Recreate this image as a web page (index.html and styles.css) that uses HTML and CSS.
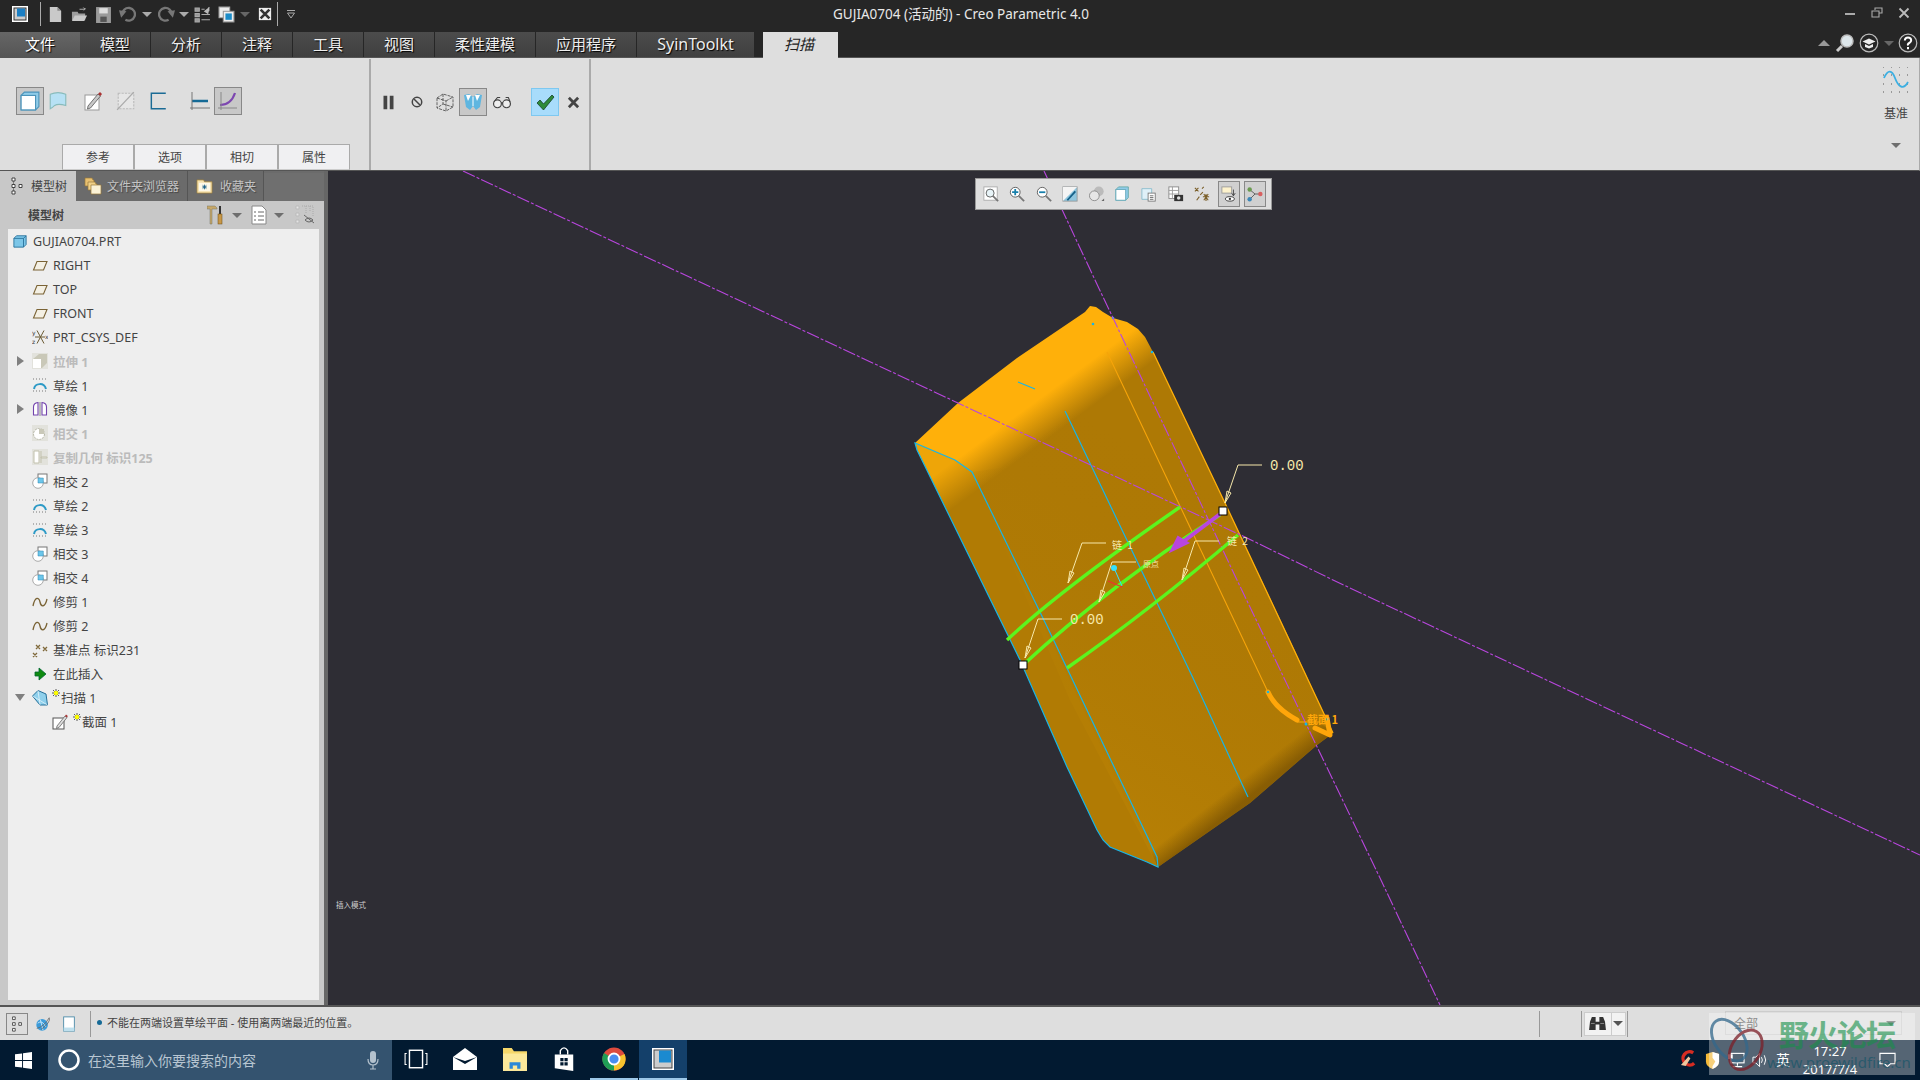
FILE: index.html
```html
<!DOCTYPE html>
<html lang="zh">
<head>
<meta charset="utf-8">
<title>GUJIA0704 (活动的) - Creo Parametric 4.0</title>
<link rel="stylesheet" href="styles.css">
</head>
<body>
<svg class="sprite" aria-hidden="true">
  <defs>
    <symbol id="i-plane" viewBox="0 0 16 16"><path d="M1.500 13 5 4.500h10L11.500 13Z" fill="#f4f0e4" stroke="#7a6335" stroke-width="1.100"/></symbol>
    <symbol id="i-csys" viewBox="0 0 16 16"><path d="M5 1.500 12 14.500M12 1.500 5 14.500M3 8h10" stroke="#6b5a32" stroke-width="1" fill="none"/><text x="0" y="6" class="tiny">y</text><text x="0" y="15" class="tiny">z</text><text x="13" y="10" class="tiny">x</text></symbol>
    <symbol id="i-extrude" viewBox="0 0 16 16"><rect width="16" height="16" fill="#e2e2dc"/><path d="M1 6 7 1h8v9l-5 5H1Z" fill="#c9c8b8"/><rect x="1" y="6" width="8" height="9" fill="#fff"/></symbol>
    <symbol id="i-sketch" viewBox="0 0 16 16"><path d="M1 2h14M1 14h14" stroke="#777" stroke-width="1" stroke-dasharray="1 2"/><path d="M2 12C3 6 12 5 14 12" stroke="#2d9ac6" stroke-width="2" fill="none"/></symbol>
    <symbol id="i-mirror" viewBox="0 0 16 16"><path d="M8 1v14" stroke="#888"/><path d="M1.500 14V6Q1.500 2 6 1.500V14ZM14.500 14V6Q14.500 2 10 1.500V14Z" fill="#fff" stroke="#7344ad" stroke-width="1.100"/></symbol>
    <symbol id="i-inter" viewBox="0 0 16 16"><rect x="6" y="1" width="9" height="9" fill="#fff" stroke="#777"/><circle cx="6" cy="10" r="5.300" fill="#fff" stroke="#aaa"/><path d="M6 5h5.300v5H6Z" fill="#6cc6ea" stroke="#2d87b0" stroke-width=".5"/></symbol>
    <symbol id="i-inter-off" viewBox="0 0 16 16"><rect width="16" height="16" fill="#e2e2dc"/><circle cx="7" cy="9" r="5.500" fill="#fff" stroke="#b5b5a5" stroke-dasharray="2 1"/><path d="M7 4h5v5H7Z" fill="#c9c8b8"/></symbol>
    <symbol id="i-copy" viewBox="0 0 16 16"><rect width="16" height="16" fill="#e2e2dc"/><path d="M2 2h5v12H2ZM9 8h6v1H9ZM9 2v12" fill="#fff" stroke="#c2c1ad"/></symbol>
    <symbol id="i-trim" viewBox="0 0 16 16"><path d="M1 12C3 2 7 3 8 8S13 14 15 5" stroke="#7a6335" stroke-width="1.300" fill="none"/></symbol>
    <symbol id="i-points" viewBox="0 0 16 16"><path d="M4 3 8 7M8 3 4 7M11 5l4 4M15 5l-4 4M1 11l4 4M5 11l-4 4" stroke="#806a3c" stroke-width="1.300"/></symbol>
    <symbol id="i-insert" viewBox="0 0 16 16"><path d="M3 6h4V2l7 6-7 6v-4H3Z" fill="#0f8a10" stroke="#063" stroke-width=".8"/></symbol>
    <symbol id="i-sweep" viewBox="0 0 16 16"><path d="M.500 6 6 .500 14 4l1.500 11H8Z" fill="#8fd0ec" stroke="#27709a"/><path d="M6 .500 8 15M.500 6 15.500 15" stroke="#fff" stroke-width=".6"/></symbol>
    <symbol id="i-pencil" viewBox="0 0 16 16"><rect x="1" y="4" width="11" height="11" fill="#fff" stroke="#555"/><path d="M5 12 13 2l2 1.500-8 10-2.500 1Z" fill="#ddd" stroke="#666" stroke-width=".8"/><path d="M13 2l2 1.500 .8-1.500L14 .5Z" fill="#a33"/></symbol>
    <symbol id="i-star" viewBox="0 0 8 8"><path d="M4 0v8M0 4h8M1 1l6 6M7 1 1 7" stroke="#333" stroke-width=".8"/><circle cx="4" cy="4" r="2.200" fill="#ff0"/></symbol>
  </defs>
</svg>

<div class="app">
  <header class="titlebar">
    <div class="qa">
      <svg class="qa-logo" viewBox="0 0 16 16"><rect width="16" height="16" fill="#fff"/><rect x="2" y="2" width="12" height="12" fill="#ccc" stroke="#333"/><rect x="5" y="2.500" width="8" height="8" fill="#1b7fc4"/></svg>
      <span class="qa-sep"></span>
      <button class="qa-btn"><svg viewBox="0 0 16 18"><path d="M2 1h8l4 4v12H2Z" fill="#c9c9c9"/><path d="M10 1v4h4" fill="#888"/></svg></button>
      <button class="qa-btn"><svg viewBox="0 0 18 16"><path d="M1 5h6l1 2h7v7H1Z" fill="#9e9e9e"/><path d="M4 9h13l-3 6H1Z" fill="#c9c9c9"/><path d="M9 2h5l-2-2 4 2-4 3 2-2H9Z" fill="#aaa"/></svg></button>
      <button class="qa-btn"><svg viewBox="0 0 16 16"><path d="M1 1h14v15H1Z" fill="#9a9a9a"/><rect x="4" y="2" width="8" height="5" fill="#ddd"/><rect x="5" y="10" width="6" height="5" fill="#555"/></svg></button>
      <button class="qa-btn"><svg viewBox="0 0 16 16"><path d="M3 8a6 6 0 1 1 3 5" fill="none" stroke="#777" stroke-width="2.200"/><path d="M0 4 7 5 2 11Z" fill="#777"/></svg></button>
      <span class="qa-arrow arrow-15"><i class="tri tri-light"></i></span>
      <button class="qa-btn"><svg viewBox="0 0 16 16"><path d="M13 8a6 6 0 1 0-3 5" fill="none" stroke="#777" stroke-width="2.200"/><path d="M16 4 9 5l5 6Z" fill="#777"/></svg></button>
      <span class="qa-arrow"><i class="tri tri-light"></i></span>
      <button class="qa-btn"><svg viewBox="0 0 16 16"><path d="M1 2h4v3H1ZM1 7h4v3H1ZM1 12h4v3H1ZM7 3h3M7 8h8M7 13h8" fill="#999" stroke="#aaa"/><path d="M10 5l4-3-1 5ZM14 1v4" fill="#bbb" stroke="#bbb"/></svg></button>
      <button class="qa-btn"><svg viewBox="0 0 16 16"><rect x="1" y="1" width="10" height="10" fill="#eee" stroke="#aaa"/><rect x="5" y="5" width="10" height="10" fill="#eee" stroke="#999"/><rect x="7" y="7" width="6" height="6" fill="#1c8cc8"/></svg></button>
      <span class="qa-arrow arrow-14"><i class="tri tri-dim"></i></span>
      <button class="qa-btn btn-close"><svg viewBox="0 0 16 16"><rect x="1" y="1" width="14" height="14" fill="#eee"/><path d="M3 3 13 13M13 3 3 13" stroke="#333" stroke-width="3"/></svg></button>
      <span class="qa-sep sep-end"></span>
      <svg class="qa-more" viewBox="0 0 10 10"><path d="M1 1.500h8M1.500 4h7L5 9Z" fill="none" stroke="#aaa"/></svg>
    </div>
    <div class="title">GUJIA0704 (活动的) - Creo Parametric 4.0</div>
    <div class="winctl">
      <svg viewBox="0 0 12 12"><path d="M1 7h10" stroke="#aaa" stroke-width="2"/></svg>
      <svg viewBox="0 0 12 12"><path d="M4 3V1h7v5H8M1 4h7v6H1Z" fill="none" stroke="#aaa" stroke-width="1.100"/></svg>
      <svg viewBox="0 0 12 12"><path d="M1.500 1.500l9 9M10.500 1.500l-9 9" stroke="#bbb" stroke-width="1.800"/></svg>
    </div>
  </header>

  <nav class="tabs">
    <div class="tab tab-file">文件</div>
    <div class="tab">模型</div>
    <div class="tab">分析</div>
    <div class="tab">注释</div>
    <div class="tab">工具</div>
    <div class="tab">视图</div>
    <div class="tab tab-wide">柔性建模</div>
    <div class="tab tab-wide">应用程序</div>
    <div class="tab tab-syin">SyinToolkt</div>
    <div class="tab tab-active">扫描</div>
    <div class="tab-tools">
      <svg class="tt-up" viewBox="0 0 12 8"><path d="M0 7 6 1l6 6Z" fill="#999"/></svg>
      <svg class="tt-round" viewBox="0 0 20 20"><circle cx="12" cy="8" r="6" fill="#dde6ea" stroke="#bbb" stroke-width="1.500"/><path d="M7 13 2 18" stroke="#ccc" stroke-width="3"/></svg>
      <svg class="tt-round" viewBox="0 0 20 20"><circle cx="10" cy="10" r="8.800" fill="none" stroke="#bbb" stroke-width="1.200"/><path d="M3.500 8.500 10 5.500l6.500 3L10 11.500Z" fill="#eee"/><path d="M6 11v3l4 1.500 4-1.500v-3l-4 2Z" fill="#eee"/></svg>
      <i class="tri tri-dim tt-tri"></i>
      <svg class="tt-round" viewBox="0 0 20 20"><circle cx="10" cy="10" r="8.800" fill="none" stroke="#bbb" stroke-width="1.200"/><path d="M6.800 7.500Q7 4.500 10 4.500t3.200 2.800Q13.200 9 11.300 10T10 12.500M10 14v2.200" fill="none" stroke="#fff" stroke-width="2"/></svg>
    </div>
  </nav>

  <section class="ribbon">
    <div class="rgroup rgroup-a">
      <div class="tools">
        <button class="tb tb-on"><svg viewBox="0 0 18 18"><path d="M1 4 4 1h13v13l-3 3H1Z" fill="#8fcbe8" stroke="#4c94ba"/><rect x="1" y="4" width="13" height="13" fill="#fff" stroke="#4c94ba"/></svg></button>
        <button class="tb"><svg viewBox="0 0 18 18"><path d="M2 3Q9 0 16 3V13Q9 11 6 13Q4 15 2 16Z" fill="#b7e1f4" stroke="#8bb"/></svg></button>
        <button class="tb ml7"><svg viewBox="0 0 20 20"><rect x="2" y="4" width="14" height="15" fill="#fff" stroke="#999"/><path d="M5 15 15 3l2.500 2-10 12-3 1Z" fill="#c8c8c8" stroke="#555" stroke-width=".8"/><path d="M15 3l2.500 2L19 3 17 1Z" fill="#a33"/></svg></button>
        <button class="tb ml5"><svg viewBox="0 0 18 18"><rect x="2" y="2" width="14" height="14" fill="#e6e6e6" stroke="#bbb" stroke-dasharray="2 1"/><path d="M1 17 16 1" stroke="#aaa" stroke-width="1.200"/></svg></button>
        <button class="tb ml4"><svg viewBox="0 0 18 18"><path d="M16 2H3v14h13" fill="none" stroke="#1a6b95" stroke-width="1.300"/></svg></button>
        <button class="tb ml14"><svg viewBox="0 0 20 20"><path d="M2 10h16" stroke="#156a96" stroke-width="2.500"/><path d="M2 1v18M0 17h20" stroke="#777"/></svg></button>
        <button class="tb tb-on"><svg viewBox="0 0 20 20"><path d="M2 14Q13 14 17 2" fill="none" stroke="#7d47b0" stroke-width="2.200"/><path d="M3 1v18M0 17h19" stroke="#888"/></svg></button>
      </div>
      <div class="subtabs">
        <div class="subtab">参考</div>
        <div class="subtab">选项</div>
        <div class="subtab">相切</div>
        <div class="subtab">属性</div>
      </div>
    </div>
    <div class="rgroup rgroup-b">
      <div class="tools tools-b">
        <button class="tb"><svg class="sm-pause" viewBox="0 0 14 18"><path d="M1 1h4.500v16H1ZM8.500 1H13v16H8.500Z" fill="#444"/></svg></button>
        <button class="tb ml1"><svg class="sm-stop" viewBox="0 0 16 16"><circle cx="8" cy="8" r="6.300" fill="none" stroke="#444" stroke-width="2"/><path d="M4 4l8 8" stroke="#444" stroke-width="2"/></svg></button>
        <button class="tb"><svg viewBox="0 0 20 20"><path d="M2 6 8 2l10 3v10l-7 4-9-3ZM2 6l9 3v10M11 9l7-4M8 2v10L2 16M8 12l10 3" fill="none" stroke="#555" stroke-width=".9" stroke-dasharray="3 1"/></svg></button>
        <button class="tb tb-on"><svg viewBox="0 0 20 20"><path d="M1 3 6 2 10 5l4-3 5 1-2 12-4 3-3-4-3 4-4-3Z" fill="#5fb6e0"/><path d="M3 3h5l-3 6ZM12 3h5l-3 6Z" fill="#fff"/><path d="M10 5v9" stroke="#fff"/></svg></button>
        <button class="tb ml1"><svg viewBox="0 0 22 16"><circle cx="6" cy="10" r="4.300" fill="#eee" stroke="#444" stroke-width="1.300"/><circle cx="16" cy="10" r="4.300" fill="#eee" stroke="#444" stroke-width="1.300"/><path d="M10 9h2M2 8 6 3h3M20 8l-2-5h-3" fill="none" stroke="#444" stroke-width="1.200"/></svg></button>
        <button class="tb tb-ok ml15"><svg viewBox="0 0 20 20"><path d="M2 11l3-3 3.500 4L17 3l2 2-10.500 13Z" fill="#2e8b3a" stroke="#16402a" stroke-width=".8"/></svg></button>
        <button class="tb"><svg class="sm-x" viewBox="0 0 14 14"><path d="M2 2l10 10M12 2 2 12" stroke="#444" stroke-width="3"/></svg></button>
      </div>
    </div>
    <div class="rgroup-c">
      <svg class="datum-ic" viewBox="0 0 26 26"><path d="M0 0h26M0 8h26M0 17h26M0 25h26" stroke="#555" stroke-width="1" stroke-dasharray="1 7" fill="none"/><path d="M1 11C5 2 9 3 12 11S20 24 25 15" fill="none" stroke="#3cafe2" stroke-width="1.800"/></svg>
      <div class="datum-label">基准</div>
      <i class="tri tri-mid"></i>
    </div>
  </section>

  <main class="main">
    <aside class="side">
      <div class="side-tabs">
        <div class="stab stab-on">
          <svg viewBox="0 0 12 18"><path d="M1 1h3v3H1ZM1 7.500h3v3H1ZM1 14h3v3H1ZM8 7.500h3v3H8Z" fill="#fff" stroke="#333" stroke-width=".9"/><path d="M2.500 4v3.500M2.500 10.500V14" stroke="#333" stroke-width=".5"/></svg>
          <span>模型树</span>
        </div>
        <div class="stab stab-b">
          <svg viewBox="0 0 18 18"><path d="M1 1h7l1 2h1v6H1Z" fill="#e8c070" stroke="#9a7a3a" stroke-width=".7"/><path d="M4 5h7l1 2h1v6H4Z" fill="#f0d088" stroke="#9a7a3a" stroke-width=".7"/><path d="M7 8h10v9H7Z" fill="#fbf2d6" stroke="#9a7a3a" stroke-width=".7"/></svg>
          <span>文件夹浏览器</span>
        </div>
        <div class="stab stab-c">
          <svg viewBox="0 0 18 16"><path d="M1 1h7l1 2h8v12H1Z" fill="#f4e0ae" stroke="#a5853f" stroke-width=".8"/><rect x="3" y="4" width="12" height="9" fill="#fdf8e8"/><path d="M9 6v5M6.500 8.500h5M7 6.800l4 3.400M11 6.800 7 10.200" stroke="#165c85" stroke-width=".9"/></svg>
          <span>收藏夹</span>
        </div>
        <div class="stab stab-rest"></div>
      </div>
      <div class="side-head">
        <span class="side-head-t">模型树</span>
        <svg class="h-ham" viewBox="0 0 16 20"><path d="M0 1h8l2 2v1H5v15H3V4H0Z" fill="#c8a868" stroke="#776" stroke-width=".5"/><rect x="12" y="1" width="2" height="8" fill="#333"/><rect x="11" y="9" width="4" height="10" fill="#c89848" stroke="#6a4a10" stroke-width=".5"/></svg>
        <i class="tri tri-mid h-t1"></i>
        <svg class="h-list" viewBox="0 0 16 20"><path d="M1 1h10l4 4v14H1Z" fill="#fff" stroke="#888"/><path d="M3 7h2M7 7h6M3 11h2M7 11h6M3 15h2M7 15h6" stroke="#666"/></svg>
        <i class="tri tri-mid h-t2"></i>
        <svg class="h-show" viewBox="0 0 20 20"><path d="M1 1h3v3H1ZM1 8h3v3H1ZM1 15h3v3H1Z" fill="#e4e4e4" stroke="#bbb"/><path d="M7 1h11v11M11 1v8M15 1v6" fill="none" stroke="#aaa" stroke-dasharray="1 1"/><path d="M9 10 19 18M10 15q4-4 8 0q-4 4-8 0Z" fill="none" stroke="#666"/></svg>
      </div>
      <div class="tree">
        <div class="row row-root"><svg class="ic ic-root" viewBox="0 0 16 16"><path d="M1 5 4 2h11v10l-3 3H1Z" fill="#7cc6e8" stroke="#27709a"/><path d="M1 5h11v10M12 5l3-3" fill="none" stroke="#27709a"/></svg><span>GUJIA0704.PRT</span></div>
        <div class="row"><i class="caret"></i><svg class="ic"><use href="#i-plane"/></svg><span>RIGHT</span></div>
        <div class="row"><i class="caret"></i><svg class="ic"><use href="#i-plane"/></svg><span>TOP</span></div>
        <div class="row"><i class="caret"></i><svg class="ic"><use href="#i-plane"/></svg><span>FRONT</span></div>
        <div class="row"><i class="caret"></i><svg class="ic"><use href="#i-csys"/></svg><span>PRT_CSYS_DEF</span></div>
        <div class="row row-off"><i class="caret caret-r"></i><svg class="ic"><use href="#i-extrude"/></svg><span>拉伸 1</span></div>
        <div class="row"><i class="caret"></i><svg class="ic"><use href="#i-sketch"/></svg><span>草绘 1</span></div>
        <div class="row"><i class="caret caret-r"></i><svg class="ic"><use href="#i-mirror"/></svg><span>镜像 1</span></div>
        <div class="row row-off"><i class="caret"></i><svg class="ic"><use href="#i-inter-off"/></svg><span>相交 1</span></div>
        <div class="row row-off"><i class="caret"></i><svg class="ic"><use href="#i-copy"/></svg><span>复制几何 标识125</span></div>
        <div class="row"><i class="caret"></i><svg class="ic"><use href="#i-inter"/></svg><span>相交 2</span></div>
        <div class="row"><i class="caret"></i><svg class="ic"><use href="#i-sketch"/></svg><span>草绘 2</span></div>
        <div class="row"><i class="caret"></i><svg class="ic"><use href="#i-sketch"/></svg><span>草绘 3</span></div>
        <div class="row"><i class="caret"></i><svg class="ic"><use href="#i-inter"/></svg><span>相交 3</span></div>
        <div class="row"><i class="caret"></i><svg class="ic"><use href="#i-inter"/></svg><span>相交 4</span></div>
        <div class="row"><i class="caret"></i><svg class="ic"><use href="#i-trim"/></svg><span>修剪 1</span></div>
        <div class="row"><i class="caret"></i><svg class="ic"><use href="#i-trim"/></svg><span>修剪 2</span></div>
        <div class="row"><i class="caret"></i><svg class="ic"><use href="#i-points"/></svg><span>基准点 标识231</span></div>
        <div class="row"><i class="caret"></i><svg class="ic"><use href="#i-insert"/></svg><span>在此插入</span></div>
        <div class="row"><i class="caret caret-d"></i><svg class="ic"><use href="#i-sweep"/></svg><svg class="star"><use href="#i-star"/></svg><span>扫描 1</span></div>
        <div class="row row-child"><svg class="ic"><use href="#i-pencil"/></svg><svg class="star"><use href="#i-star"/></svg><span>截面 1</span></div>
      </div>
    </aside>
    <div class="grip"></div>

    <div class="canvas">
      <svg class="scene" viewBox="328 171 1592 834" preserveAspectRatio="none">
        <defs>
          <linearGradient id="gTop" gradientUnits="userSpaceOnUse" x1="1039" y1="399" x2="1061" y2="429">
            <stop offset="0" stop-color="#ffb00a"/>
            <stop offset="1" stop-color="#ae7905"/>
          </linearGradient>
          <linearGradient id="gFace" gradientUnits="userSpaceOnUse" x1="1230" y1="500" x2="1040" y2="820">
            <stop offset="0" stop-color="#a97504" stop-opacity="0"/>
            <stop offset="1" stop-color="#c08705" stop-opacity=".55"/>
          </linearGradient>
          <linearGradient id="gEdge" gradientUnits="userSpaceOnUse" x1="1226" y1="792" x2="1237" y2="806">
            <stop offset="0" stop-color="#7c5403" stop-opacity="0"/>
            <stop offset="1" stop-color="#7c5403" stop-opacity=".75"/>
          </linearGradient>
        </defs>

        <path class="body" d="M915 443 958 403 1017 358 1085 312 1090 306 1096 307 1103 312 1113 318 1127 322 1138 329 1145 337 1153 352 1225 503 1290 640 1320 705 1333 733 1317 745 1250 803 1158 867 1147 862 1110 847 1103 840 1097 830 1067 767 1020 660 917 450Z"/>
        <path class="face" d="M1000 468 1153 352 1333 733 1158 867 1070 700 972 472Z"/>
        <path class="front" d="M915 443 955 460 972 472 1158 867 1147 862 1110 847 1103 840 1097 830 1067 767 1020 660 917 450Z"/>
        <path class="edge" d="M1333 733 1317 745 1250 803 1158 867 1150 850 1240 780 1310 715Z"/>

        <path class="ln-cyan" d="M915 443 917 450 1020 660 1067 767 1097 830 1103 840 1110 847 1147 862 1158 867 1157 857 1055 643 972 472 955 460 915 443Z"/>
        <path class="ln-cyan" d="M1065 411 1193 678 1248 797M1018 382 1035 389"/>
        <path class="ln-orange" d="M1107 352 1215 580 1267 690"/>
        <path class="ln-edge" d="M1153 352 1225 503 1333 733"/>
        <circle class="dot-s" cx="1093" cy="324" r="1.300"/>
        <circle class="dot-s" cx="1113" cy="318" r="1.300"/>
        <circle class="dot-s" cx="1152" cy="352" r="1.300"/>

        <path class="ln-purple" d="M463 171 958 403 1247 538 1333 580 1920 855"/>
        <path class="ln-purple" d="M1044 171 1095 280 1237 580 1380 878 1440 1005"/>

        <path class="ln-green" d="M1180 507Q1060 590 1007 640"/>
        <path class="ln-green" d="M1220 515Q1110 585 1023 665"/>
        <path class="ln-green" d="M1238 535Q1150 610 1067 668"/>

        <path class="arrow-shaft" d="M1220 514 1180 544"/>
        <path class="arrow-head" d="M1171 551 1178 537 1188 543Z"/>

        <path class="leader" d="M1262 465H1238L1225 503M1062 619H1038L1025 658M1106 543H1082L1068 583M1136 562H1112L1099 602M1219 541H1195L1182 580"/>
        <path class="lead-tip" d="M1225 503 1227 491 1231 493ZM1025 658 1027 646 1031 648ZM1068 583 1070 571 1074 573ZM1099 602 1101 590 1105 592ZM1182 580 1184 568 1188 570Z"/>
        <path class="ln-thin" d="M1114 568 1122 586"/>
        <path class="ln-red" d="M1108 581 1122 587"/>
        <circle class="dot" cx="1114" cy="568" r="3"/>

        <rect class="grabber" x="1219" y="507" width="8" height="8"/>
        <rect class="grabber" x="1019" y="661" width="8" height="8"/>

        <path class="ln-section" d="M1268 692Q1275 708 1297 720M1315 728 1330 735 1327 718"/>
        <path class="ln-sec-thin" d="M1297 722H1320"/>
        <circle class="dot-s" cx="1268" cy="692" r="1.300"/>
        <circle class="dot-s" cx="1306" cy="724" r="1.500"/>
        <circle class="dot-s" cx="1327" cy="719" r="1.500"/>

        <text class="dim" x="1270" y="470">0.00</text>
        <text class="dim" x="1070" y="624">0.00</text>
        <text class="lab" x="1112" y="549">链 1</text>
        <text class="lab lab-sm" x="1143" y="567">原点</text>
        <text class="lab" x="1227" y="545">链 2</text>
        <text class="lab-o" x="1307" y="724">截面 1</text>
        <text class="mode" x="336" y="908">插入模式</text>
      </svg>

      <div class="view-bar">
        <svg viewBox="0 0 18 18"><rect x="1" y="1" width="15" height="15" fill="#fff" stroke="#aaa"/><circle cx="8" cy="8" r="4.500" fill="#e8f4f8" stroke="#555"/><path d="M11 11l6 6" stroke="#777" stroke-width="2"/></svg>
        <svg viewBox="0 0 18 18"><circle cx="7" cy="7" r="5.500" fill="#fff" stroke="#555"/><path d="M7 3.500v7M3.500 7h7" stroke="#177fab" stroke-width="2"/><path d="M11 11l6 6" stroke="#777" stroke-width="2"/></svg>
        <svg viewBox="0 0 18 18"><circle cx="7" cy="7" r="5.500" fill="#fff" stroke="#555"/><path d="M3.500 7h7" stroke="#177fab" stroke-width="2"/><path d="M11 11l6 6" stroke="#777" stroke-width="2"/></svg>
        <svg viewBox="0 0 18 18"><rect x="1" y="1" width="16" height="16" fill="#8fc6de" stroke="#999"/><path d="M1 17V1h16Z" fill="#f4f4f4"/><path d="M6 16 15 6" stroke="#135f87" stroke-width="2"/></svg>
        <svg viewBox="0 0 18 18"><circle cx="11" cy="6" r="5.500" fill="#bbb"/><circle cx="6" cy="11" r="5.500" fill="#e6e6e6" stroke="#888"/><path d="M14 17h3v-3Z" fill="#666"/></svg>
        <svg viewBox="0 0 18 18"><path d="M1 4 4 1h11v12l-3 3H1Z" fill="#8fcbe8" stroke="#6aa"/><rect x="1" y="4" width="11" height="12" fill="#fff" stroke="#6ab"/></svg>
        <svg viewBox="0 0 18 18"><path d="M1 3h11v12H1Z" fill="#dff0f8" stroke="#8bc"/><rect x="8" y="8" width="8" height="9" fill="#fff" stroke="#777"/><path d="M10 11h4M10 13h4M10 15h4" stroke="#666"/></svg>
        <svg viewBox="0 0 18 18"><rect x="1" y="1" width="11" height="13" fill="#fff" stroke="#888"/><path d="M1 5h11M1 9h11M5 1v13" stroke="#999"/><rect x="7" y="10" width="10" height="7" fill="#333"/><circle cx="12" cy="13.500" r="2" fill="#ddd"/></svg>
        <svg viewBox="0 0 18 18"><path d="M1 2l4 4M5 2 1 6M9 3l2-2M7 10l3-3M3 16l3-4M10 12l7 0M13.500 9v8M11 9l5 7M16 9l-5 7" stroke="#7a5e28" stroke-width="1.200" fill="none"/></svg>
        <span class="vb-on"><svg viewBox="0 0 18 18"><rect x="1" y="1" width="11" height="7" fill="#fdf2cc" stroke="#999"/><path d="M14 4v7M12 8l2 3 2-3" stroke="#444" fill="none"/><ellipse cx="10" cy="14.500" rx="5" ry="2.500" fill="#fff" stroke="#333"/><circle cx="10" cy="14.500" r="1.300" fill="#333"/></svg></span>
        <span class="vb-on"><svg viewBox="0 0 18 18"><path d="M3 4 9 9 3 15M9 9h6" stroke="#555" fill="none"/><circle cx="3" cy="4" r="2.500" fill="#6a9a50"/><circle cx="15" cy="9" r="2.500" fill="#d86060"/><circle cx="3" cy="15" r="2.500" fill="#3d88b8"/></svg></span>
      </div>
    </div>
  </main>
  <div class="strip"></div>

  <footer class="status">
    <button class="st-btn st-on"><svg viewBox="0 0 12 18"><path d="M1 1h3v3H1ZM1 7.500h3v3H1ZM1 14h3v3H1ZM8 7.500h3v3H8Z" fill="#fff" stroke="#333" stroke-width=".9"/></svg></button>
    <button class="st-btn"><svg viewBox="0 0 18 18"><circle cx="8" cy="10" r="6.500" fill="#3a9ad9"/><path d="M3 8q5-4 9 4M6 4l3 12" stroke="#d0ecfa" fill="none"/><path d="M2 14Q10 12 16 2q2 5-9 13" fill="none" stroke="#666" stroke-width=".9"/></svg></button>
    <button class="st-btn"><svg viewBox="0 0 18 18"><rect x="3" y="1" width="12" height="16" fill="#fff" stroke="#4a8aa8"/><rect x="3" y="13" width="12" height="4" fill="#bfe0ee"/></svg></button>
    <span class="st-sep"></span>
    <i class="st-dot"></i>
    <span class="st-msg">不能在两端设置草绘平面 - 使用离两端最近的位置。</span>
    <span class="st-sep st-r1"></span>
    <span class="st-sep st-r2"></span>
    <div class="st-find">
      <svg viewBox="0 0 20 16"><path d="M2 6 4 1h4v5h4V1h4l2 5 1 9h-7V9H8v6H1Z" fill="#333"/><path d="M3 8h4M13 8h4" stroke="#888"/></svg>
      <i class="tri tri-dark"></i>
    </div>
    <span class="st-sep st-r3"></span>
    <div class="st-combo"><span>全部</span><i class="tri tri-mid"></i></div>
  </footer>

  <footer class="taskbar">
    <svg class="tk-win" viewBox="0 0 18 18"><path d="M0 2.500 7.500 1.500V8.500H0ZM8.500 1.300 18 0V8.500H8.500ZM0 9.500H7.500V16.500L0 15.500ZM8.500 9.500H18V18L8.500 16.700Z" fill="#fff"/></svg>
    <div class="tk-search">
      <svg class="tk-cortana" viewBox="0 0 24 24"><circle cx="12" cy="12" r="9.500" fill="none" stroke="#fff" stroke-width="2.500"/></svg>
      <span class="tk-ph">在这里输入你要搜索的内容</span>
      <svg class="tk-mic" viewBox="0 0 12 20"><rect x="3" y="1" width="6" height="12" rx="3" fill="#b4c2ce"/><path d="M1 9q0 6 5 6t5-6M6 15v4M3 19h6" fill="none" stroke="#b4c2ce" stroke-width="1.200"/></svg>
    </div>
    <span class="tk-app tk-view"><svg viewBox="0 0 22 18"><rect x="5" y="1" width="12" height="16" fill="none" stroke="#fff" stroke-width="1.300"/><path d="M2.500 4H1v10h1.500M19.500 4H21v10h-1.500" fill="none" stroke="#fff"/></svg></span>
    <span class="tk-app"><svg viewBox="0 0 24 22"><path d="M0 9 12 0l12 9v13H0Z" fill="#fff"/><path d="M0 9l12 7 12-7-12 4Z" fill="#021a31"/></svg></span>
    <span class="tk-app"><svg viewBox="0 0 22 22"><path d="M0 1h8l2 3h12v18H0Z" fill="#f6d76a"/><path d="M0 6h22v16H0Z" fill="#fbe89a"/><path d="M6 20v-6h10v6h-3v-3H9v3Z" fill="#2b88d8"/></svg></span>
    <span class="tk-app"><svg viewBox="0 0 20 26"><path d="M0 8h20v18L0 23Z" fill="#fff"/><path d="M6 8V4q4-6 8 0v4" fill="none" stroke="#fff" stroke-width="1.500"/><path d="M6 12h3.500v3.500H6ZM10.500 12H14v3.500h-3.500ZM6 16.500h3.500V20H6ZM10.500 16.500H14V20h-3.500Z" fill="#021a31"/></svg></span>
    <span class="tk-app tk-open"><svg viewBox="0 0 24 24"><circle cx="12" cy="12" r="11.500" fill="#dd4b3e"/><path d="M12 12 22.500 7A11.500 11.500 0 0 1 12 23.500Z" fill="#f7c32e"/><path d="M12 12 12 23.500A11.500 11.500 0 0 1 2 6Z" fill="#1f9e55"/><circle cx="12" cy="12" r="5.500" fill="#4a8df0" stroke="#fff" stroke-width="1.800"/></svg></span>
    <span class="tk-app tk-active"><svg viewBox="0 0 24 24"><rect x="1" y="1" width="22" height="22" fill="#fff"/><rect x="3" y="3" width="18" height="18" fill="#ccc" stroke="#444"/><rect x="8" y="3.500" width="12" height="12" fill="#1b8ad0"/></svg></span>
    <div class="tray">
      <svg class="tr-cc" viewBox="0 0 18 18"><path d="M14 3a7 7 0 1 0 1 11" fill="none" stroke="#d62c22" stroke-width="3.500"/><path d="M1 16 9 7l2 2-5 8Z" fill="#f0c8a0"/></svg>
      <svg class="tr-sh" viewBox="0 0 16 18"><path d="M1 2 8 0l7 2v8q0 5-7 8-7-3-7-8Z" fill="#f3b93a"/><path d="M8 0l7 2v8q0 5-7 8Z" fill="#fff"/><path d="M8 6l3 4-3 5-3-5Z" fill="#f3b93a"/></svg>
      <svg class="tr-net" viewBox="0 0 18 16"><rect x="3" y="1" width="14" height="10" fill="none" stroke="#fff" stroke-width="1.200"/><rect x="0" y="2" width="5" height="5" fill="#fff"/><path d="M10 11v3M5 15h10" stroke="#fff" stroke-width="1.200"/></svg>
      <svg class="tr-vol" viewBox="0 0 18 16"><path d="M1 5h3l4-4v14l-4-4H1Z" fill="none" stroke="#fff"/><path d="M10 5q2 3 0 6M13 3q3 5 0 10" fill="none" stroke="#fff"/></svg>
      <span class="tr-ime">英</span>
      <div class="tr-clock"><span>17:27</span><span>2017/7/4</span></div>
      <svg class="tr-note" viewBox="0 0 18 16"><path d="M1 1h16v11h-5l-3 3-3-3H1Z" fill="none" stroke="#fff" stroke-width="1.200"/></svg>
    </div>
  </footer>
</div>

<div class="watermark">
  <svg class="wm-logo" viewBox="0 0 60 60"><ellipse cx="21" cy="26" rx="15" ry="24" transform="rotate(-35 21 26)" fill="none" stroke="#33688c" stroke-width="3"/><ellipse cx="38" cy="36" rx="15" ry="22" transform="rotate(30 38 36)" fill="none" stroke="#7c1f28" stroke-width="3"/></svg>
  <div class="wm-title">野火论坛</div>
  <div class="wm-url">www.proewildfire.cn</div>
</div>
</body>
</html>
```

FILE: styles.css
```css
* { box-sizing: border-box; }
html, body { margin: 0; padding: 0; height: 100%; overflow: hidden; }
body { font-family: "Noto Sans", "Noto Sans CJK SC", sans-serif; font-size: 13px; color: #333; background: #262626; }
button { border: 0; padding: 0; margin: 0; background: none; display: flex; align-items: center; justify-content: center; }
svg { display: block; }
.sprite { position: absolute; width: 0; height: 0; }
.tiny { font: 6px "DejaVu Sans", sans-serif; fill: #333; }
.app { width: 1920px; height: 1080px; display: flex; flex-direction: column; }

/* triangles */
.tri { display: block; width: 0; height: 0; border-left: 5px solid transparent; border-right: 5px solid transparent; border-top: 5px solid #888; }
.tri-light { border-top-color: #aaa; }
.tri-dim { border-top-color: #666; }
.tri-mid { border-top-color: #6e6e6e; }
.tri-dark { border-top-color: #555; }

/* title bar */
.titlebar { height: 32px; flex: none; background: #262626; display: flex; align-items: flex-start; position: relative; padding-left: 12px; }
.qa { display: flex; align-items: center; height: 28px; }
.qa-logo { width: 16px; height: 16px; margin-right: 12px; }
.qa-sep { width: 1px; height: 24px; background: #aaa; margin-right: 2px; }
.qa-btn { width: 24px; height: 24px; }
.qa-btn svg { width: 17px; height: 17px; }
.qa-arrow { width: 12px; display: flex; justify-content: center; }
.arrow-15 { width: 15px; }
.arrow-14 { width: 14px; }
.btn-close { margin-left: 1px; }
.btn-close svg { width: 14px; height: 14px; }
.qa-more { width: 10px; height: 10px; margin-left: 6px; }
.title { position: absolute; left: 0; right: 0; top: 3px; text-align: center; font-size: 13.500px; line-height: 22px; color: #e8e8e8; padding-left: 2px; }
.winctl { position: absolute; right: 10px; top: 7px; display: flex; gap: 15px; }
.winctl svg { width: 12px; height: 12px; }

/* tabs */
.tabs { height: 26px; flex: none; display: flex; background: #262626; border-bottom: 1px solid #555; }
.tab { width: 70px; margin-right: 1px; background: linear-gradient(#4c4c4c, #3f3f3f); color: #eee; font-size: 15px; line-height: 24px; text-align: center; text-shadow: 1px 1px 1px #000; }
.tab-file { width: 80px; margin-right: 0; background: linear-gradient(#666, #555); color: #fff; }
.tab-wide { width: 100px; }
.tab-syin { width: 117px; margin-right: 9px; font-size: 16px; }
.tab-active { width: 75px; height: 26px; background: #dedede; color: #222; font-style: italic; text-shadow: none; padding-right: 3px; }
.tab-tools { margin-left: auto; display: flex; align-items: center; padding-right: 2px; height: 26px; margin-top: -2px; }
.tab-tools svg { flex: none; }
.tt-up { width: 12px; height: 8px; margin-right: 5px; }
.tt-round { width: 20px; height: 20px; }
.tt-round + .tt-round { margin-left: 4px; }
.tt-tri { margin: 0 4px 0 5px; }

/* ribbon */
.ribbon { height: 113px; flex: none; background: #dedede; display: flex; border-bottom: 1px solid #555; padding-top: 1px; border-right: 1px solid #aaa; }
.rgroup { display: flex; flex-direction: column; border-right: 2px solid #aaa; }
.rgroup-a { width: 371px; }
.rgroup-b { width: 220px; }
.tools { display: flex; padding: 28px 0 0 16px; }
.tools-b { padding-left: 3px; padding-top: 29px; }
.tb { width: 28px; height: 28px; flex: none; border: 1px solid transparent; }
.tb svg { width: 20px; height: 20px; }
.tb svg.sm-pause { width: 13px; height: 15px; }
.tb svg.sm-stop { width: 12px; height: 12px; }
.tb svg.sm-x { width: 13px; height: 13px; }
.tb-on { background: #c8c8c8; border: 1px solid #888; }
.tb-ok { background: #a8dcfb; border: 1px solid #7ec8f0; }
.ml1 { margin-left: 1px; }
.ml4 { margin-left: 4px; }
.ml5 { margin-left: 5px; }
.ml7 { margin-left: 7px; }
.ml14 { margin-left: 14px; }
.ml15 { margin-left: 15px; }
.subtabs { display: flex; margin: auto 0 0 62px; }
.subtab { width: 72px; height: 26px; background: #f0f0f2; border: 1px solid #aaa; border-bottom-color: #ccc; font-size: 12px; line-height: 26px; text-align: center; color: #444; }
.rgroup-c { margin-left: auto; width: 38px; margin-right: 4px; display: flex; flex-direction: column; align-items: center; padding-top: 8px; }
.datum-ic { width: 26px; height: 26px; }
.datum-label { font-size: 12px; line-height: 16px; margin-top: 13px; color: #444; }
.rgroup-c .tri { margin-top: 21px; }

/* main */
.main { height: 834px; flex: none; display: flex; }
.side { width: 324px; flex: none; background: #c8c8c8; display: flex; flex-direction: column; }
.grip { width: 4px; background: #666; flex: none; }
.side-tabs { height: 30px; flex: none; display: flex; background: #6b6b6b; }
.stab { display: flex; align-items: center; font-size: 12px; color: #c4c4c4; background: #6b6b6b; border-right: 1px solid #555; text-shadow: 1px 1px 1px #444; }
.stab-on { width: 76px; background: #c8c8c8; color: #444; padding-left: 10px; gap: 7px; text-shadow: none; border-right: 0; }
.stab-on svg { width: 14px; height: 18px; }
.stab-b { width: 112px; padding-left: 8px; gap: 5px; }
.stab-b svg { width: 18px; height: 18px; }
.stab-c { width: 76px; padding-left: 8px; gap: 7px; }
.stab-c svg { width: 17px; height: 15px; }
.stab-rest { flex: 1; background: #6f6f6f; border: 0; margin-top: 2px; }
.side-head { height: 28px; flex: none; display: flex; align-items: center; position: relative; padding-left: 28px; }
.side-head-t { font-size: 12px; font-weight: 700; color: #444; width: 179px; }
.h-ham { width: 16px; height: 20px; }
.h-t1 { margin: 0 9px 0 9px; }
.h-list { width: 16px; height: 20px; }
.h-t2 { margin: 0 11px 0 7px; }
.h-show { width: 20px; height: 20px; }
.tree { flex: 1; margin: 0 5px 5px 8px; background: #eee; }
.row { height: 24.050px; display: flex; align-items: center; font-size: 12.500px; color: #444; white-space: nowrap; }
.caret { width: 24px; flex: none; display: flex; justify-content: center; }
.caret-r::before { content: ""; border-left: 7px solid #808080; border-top: 5px solid transparent; border-bottom: 5px solid transparent; margin-left: 1px; }
.caret-d::before { content: ""; border-top: 7px solid #808080; border-left: 5px solid transparent; border-right: 5px solid transparent; margin-left: -1px; }
.ic { width: 16px; height: 16px; flex: none; margin-right: 5px; }
.row-root { padding-left: 5px; }
.ic-root { width: 14px; height: 14px; margin-right: 6px; }
.row-off { color: #bbb; font-weight: 700; }
.star { width: 8px; height: 8px; flex: none; margin: -9px 1px 0 -1px; }
.row-child { padding-left: 44px; }
.row-child .star { margin-left: 0; }

/* canvas */
.canvas { flex: 1; position: relative; background: #2e2d34; overflow: hidden; }
.scene { position: absolute; left: 0; top: 0; width: 100%; height: 100%; }
.body { fill: url(#gTop); }
.face { fill: url(#gFace); }
.front { fill: #bb8305; opacity: .25; }
.edge { fill: url(#gEdge); }
.ln-cyan { fill: none; stroke: #17b5e8; stroke-width: 1.200; }
.ln-orange { fill: none; stroke: #f6a40a; stroke-width: 1.100; }
.ln-edge { fill: none; stroke: #ffb00a; stroke-width: 1.300; }
.ln-purple { fill: none; stroke: #b946de; stroke-width: 1.100; stroke-dasharray: 13 2 3 2; }
.ln-green { fill: none; stroke: #5cf51e; stroke-width: 3.400; }
.arrow-shaft { stroke: #b946de; stroke-width: 4; }
.arrow-head { fill: #b946de; stroke: #b946de; stroke-width: 2; }
.leader { fill: none; stroke: #f6e8aa; stroke-width: 1; }
.lead-tip { fill: none; stroke: #f6e8aa; stroke-width: 1; }
.ln-thin { stroke: #33e0ff; stroke-width: 1; }
.ln-red { stroke: #f03030; stroke-width: 1.300; }
.dot { fill: #33e0ff; }
.grabber { fill: #fff; stroke: #000; stroke-width: 1; }
.ln-section { fill: none; stroke: #ffa60a; stroke-width: 5; stroke-linecap: round; stroke-linejoin: round; }
.ln-sec-thin { stroke: #ffa60a; stroke-width: 1; }
.dot-s { fill: #17b5e8; }
.dim { font: 14px "Liberation Mono", monospace; fill: #f6e8aa; }
.lab { font: 10px "Noto Sans CJK SC", sans-serif; letter-spacing: 1.500px; fill: #f6e8aa; }
.lab-sm { font-size: 8px; letter-spacing: 0; }
.lab-o { font: 11px "Noto Sans CJK SC", sans-serif; font-weight: 700; fill: #ffa60a; }
.mode { font: 7.500px "Noto Sans CJK SC", sans-serif; fill: #cfcfcf; }
.view-bar { position: absolute; left: 647px; top: 7px; width: 297px; height: 32px; background: #dedede; border: 1px solid #999; display: flex; align-items: center; padding-left: 7px; gap: 10.400px; }
.view-bar > svg { width: 16px; height: 16px; flex: none; }
.vb-on { width: 22px; height: 26px; margin: 0 -3px; flex: none; border: 1px solid #888; background: #d0d0d0; display: flex; align-items: center; justify-content: center; }
.vb-on svg { width: 16px; height: 16px; }
.strip { height: 2px; flex: none; background: #555; }

/* status */
.status { height: 33px; flex: none; background: #dedede; display: flex; align-items: center; padding-left: 6px; position: relative; }
.st-btn { width: 22px; height: 22px; flex: none; margin-right: 4px; }
.st-btn svg { width: 16px; height: 16px; }
.st-on { background: #ddd; border: 1px solid #888; }
.st-sep { width: 1px; height: 26px; background: #999; flex: none; margin-left: 6px; }
.st-dot { width: 5px; height: 5px; border-radius: 50%; background: #156a96; margin: -3px 5px 0 6px; flex: none; }
.st-msg { font-size: 11px; color: #444; width: 1432px; flex: none; margin-bottom: 3px; }
.st-r1 { margin-left: 0; }
.st-r2 { margin-left: 41px; }
.st-find { width: 42px; height: 24px; display: flex; align-items: center; background: linear-gradient(90deg, #f2f2f2 26px, #ccc 26px, #ccc 27px, #f2f2f2 27px); border: 1px solid #ccc; margin-left: 2px; flex: none; }
.st-find svg { width: 19px; height: 15px; margin: 0 6px 0 3px; }
.st-r3 { margin-left: 1px; }
.st-combo { position: absolute; left: 1725px; top: 4px; width: 177px; height: 24px; border: 1px solid #ccc; display: flex; align-items: center; justify-content: space-between; padding: 0 5px 0 8px; font-size: 12px; color: #555; }

/* taskbar */
.taskbar { height: 40px; flex: none; background: #021a31; display: flex; align-items: center; padding-left: 15px; position: relative; }
.tk-win { width: 17px; height: 17px; flex: none; margin-right: 16px; }
.tk-search { width: 344px; height: 40px; background: #34536f; display: flex; align-items: center; padding-left: 9px; flex: none; }
.tk-cortana { width: 24px; height: 24px; margin-right: 7px; }
.tk-ph { font-size: 14px; color: #b8c6d2; width: 279px; flex: none; }
.tk-mic { width: 12px; height: 20px; }
.tk-app { width: 48px; height: 40px; display: flex; align-items: center; justify-content: center; flex: none; border-bottom: 2px solid transparent; margin-right: 1.400px; }
.tk-app svg { width: 24px; height: 24px; }
.tk-open { border-bottom-color: #9dc8e8; }
.tk-active { background: #14406a; border-bottom-color: #9dc8e8; }
.tray { position: absolute; left: 0; top: 0; width: 100%; height: 40px; pointer-events: none; }
.tray > * { position: absolute; }
.tr-cc { left: 1680px; top: 10px; width: 17px; height: 17px; }
.tr-sh { left: 1705px; top: 12px; width: 15px; height: 17px; }
.tr-net { left: 1728px; top: 12px; width: 17px; height: 16px; }
.tr-vol { left: 1752px; top: 12px; width: 17px; height: 16px; }
.tr-ime { left: 1776px; top: 10px; font-size: 14px; color: #fff; line-height: 20px; }
.tr-clock { left: 1800px; top: 2px; width: 60px; display: flex; flex-direction: column; align-items: center; font-size: 13px; line-height: 18px; color: #fff; }
.tr-note { left: 1879px; top: 12px; width: 17px; height: 16px; }

/* watermark */
.watermark { position: absolute; left: 1709px; top: 1013px; width: 206px; height: 62px; background: rgba(255,255,255,.33); pointer-events: none; }
.wm-logo { position: absolute; left: 0; top: 1px; width: 58px; height: 60px; opacity: .75; }
.wm-title { position: absolute; left: 70px; top: 3px; font: 700 30px/34px "Noto Sans CJK SC", sans-serif; color: #169048; opacity: .6; white-space: nowrap; letter-spacing: -1px; }
.wm-url { position: absolute; left: 58px; top: 39px; font: 15px/20px "Noto Sans", sans-serif; color: #17566a; opacity: .7; white-space: nowrap; }
```
